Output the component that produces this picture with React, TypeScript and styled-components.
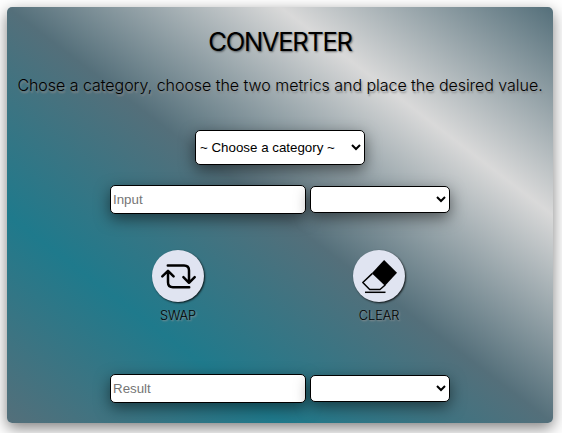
import React, { useState } from "react";
import styled, { createGlobalStyle, css } from "styled-components";

const GlobalStyle = createGlobalStyle`
  * { box-sizing: border-box; }
  body {
    margin: 0;
    min-height: 100vh;
    display: flow-root;
    background: #fff;
    color: #000;
    font-family: Inter, "Liberation Sans", sans-serif;
    overflow: hidden;
  }
`;

const raised = css`
  box-shadow: 0 5px 15px rgba(0, 0, 0, 0.5);
`;

const Card = styled.main`
  width: 546px;
  height: 416px;
  margin: 7px;
  padding-top: 20px;
  display: flex;
  flex-direction: column;
  align-items: center;
  border-radius: 5px;
  background: linear-gradient(to top right, #546f7a, #1f7a8c, #546f7a, #d9d9d9, #546f7a);
  ${raised}
`;

const Title = styled.h1`
  margin: 0;
  font-size: 25.6px;
  line-height: 30px;
  font-weight: 400;
  letter-spacing: -1.35px;
  text-shadow: 1px 1px 2px rgba(0, 0, 0, 0.5);
`;

const Lead = styled.p`
  margin: 18px 0 35px;
  font-size: 16px;
  line-height: 20px;
  font-weight: 300;
  letter-spacing: -0.04px;
  white-space: nowrap;
  text-shadow: 1px 2px 2px #888;
`;

const field = css`
  margin: 0;
  border: 1px solid #000;
  border-radius: 5px;
  background-color: #fff;
  font: 13.333px "Liberation Sans", Arial, sans-serif;
  ${raised}
`;

const Select = styled.select<{ $width: number; $height: number }>`
  ${field}
  width: ${(p) => p.$width}px;
  height: ${(p) => p.$height}px;
  padding: 0 1px 0 0;
  color: #000;
`;

const Input = styled.input`
  ${field}
  width: 196px;
  height: 29px;
  padding: 1px 2px;
  &::placeholder { color: #757575; }
`;

const FieldRow = styled.div`
  display: flex;
  align-items: center;
  gap: 4px;
`;

const Actions = styled.div`
  display: flex;
  justify-content: center;
  gap: 149px;
  margin: 36px 0 50px;
  padding-right: 3px;
`;

const Action = styled.div`
  width: 52px;
  height: 74px;
  display: flex;
  flex-direction: column;
  align-items: center;
  gap: 5px;
`;

const RoundButton = styled.button`
  width: 52px;
  height: 52px;
  padding: 0;
  border: 0;
  border-radius: 50%;
  background: #e0e4f1;
  box-shadow: 1px 1px 2px rgba(0, 0, 0, 0.8);
  cursor: pointer;
  svg { display: block; }
`;

const Label = styled.span`
  font-size: 12.8px;
  line-height: 17px;
  font-weight: 300;
  letter-spacing: -0.1px;
  text-shadow: 1px 1px 2px #999;
`;

const SwapIcon = () => (
  <svg width="52" height="52" viewBox="0 0 52 52" fill="none" stroke="#000" strokeWidth="2.5" strokeLinecap="round" strokeLinejoin="round">
    <path d="M15.8 15.5H32Q37 15.5 37 20.5V32M31.4 27.2L37 32.8L42.7 27.2" />
    <path d="M37.2 37.3H21Q16 37.3 16 32.3V21M10.3 26.4L16 20.8L21.6 26.4" />
  </svg>
);

const EraserIcon = () => (
  <svg width="52" height="52" viewBox="0 0 52 52" fill="none" stroke="#000" strokeWidth="1.5" strokeLinejoin="round">
    <path d="M19.2 23.6L9.8 32.5L16.7 39.5H27L32.2 35" />
    <path d="M31.1 10L44 22.7L32 35.8L18.8 23.2Z" fill="#000" stroke="none" />
    <path d="M12 42.3H32.5" />
  </svg>
);

const ValueField = ({ placeholder, value, onChange }: { placeholder: string; value: string; onChange: (v: string) => void }) => (
  <FieldRow>
    <Input placeholder={placeholder} value={value} onChange={(e) => onChange(e.target.value)} />
    <Select $width={140} $height={27} />
  </FieldRow>
);

const CategoryRow = styled.div`
  display: flex;
  margin-bottom: 20px;
`;

export default function App() {
  const [input, setInput] = useState("");
  const [result, setResult] = useState("");
  const swap = () => {
    setInput(result);
    setResult(input);
  };
  const clear = () => {
    setInput("");
    setResult("");
  };

  return (
    <>
      <GlobalStyle />
      <Card>
        <Title>CONVERTER</Title>
        <Lead>Chose a category, choose the two metrics and place the desired value.</Lead>
        <CategoryRow>
          <Select $width={170} $height={35}>
            <option>~ Choose a category ~</option>
          </Select>
        </CategoryRow>
        <ValueField placeholder="Input" value={input} onChange={setInput} />
        <Actions>
          <Action>
            <RoundButton onClick={swap}><SwapIcon /></RoundButton>
            <Label>SWAP</Label>
          </Action>
          <Action>
            <RoundButton onClick={clear}><EraserIcon /></RoundButton>
            <Label>CLEAR</Label>
          </Action>
        </Actions>
        <ValueField placeholder="Result" value={result} onChange={setResult} />
      </Card>
    </>
  );
}
